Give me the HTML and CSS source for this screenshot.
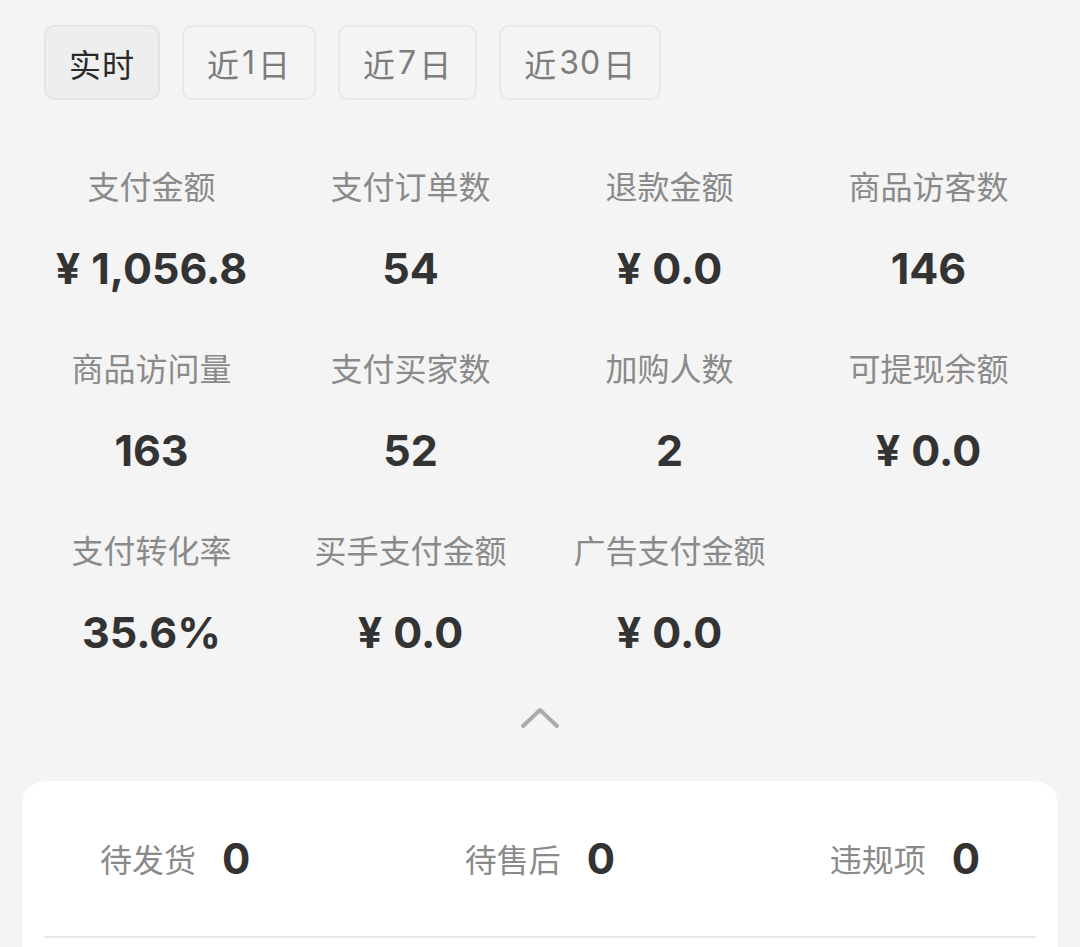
FILE: index.html
```html
<!DOCTYPE html>
<html lang="zh-CN">
<head>
    <meta charset="UTF-8">
    <meta name="viewport" content="width=device-width, initial-scale=1.0">
    <title>数据概览</title>
    <link rel="stylesheet" href="styles.css">
</head>
<body>
    <div class="page">
        <!-- Time range tabs -->
        <div class="tabs">
            <div class="tab active">实时</div>
            <div class="tab">近<span class="num">1</span>日</div>
            <div class="tab">近<span class="num">7</span>日</div>
            <div class="tab">近<span class="num">30</span>日</div>
        </div>

        <!-- Key numbers -->
        <div class="stats">
            <div class="stat"><div class="label">支付金额</div><div class="value"><span class="yen">¥</span>1,056.8</div></div>
            <div class="stat"><div class="label">支付订单数</div><div class="value">54</div></div>
            <div class="stat"><div class="label">退款金额</div><div class="value"><span class="yen">¥</span>0.0</div></div>
            <div class="stat"><div class="label">商品访客数</div><div class="value">146</div></div>

            <div class="stat"><div class="label">商品访问量</div><div class="value">163</div></div>
            <div class="stat"><div class="label">支付买家数</div><div class="value">52</div></div>
            <div class="stat"><div class="label">加购人数</div><div class="value">2</div></div>
            <div class="stat"><div class="label">可提现余额</div><div class="value"><span class="yen">¥</span>0.0</div></div>

            <div class="stat"><div class="label">支付转化率</div><div class="value">35.6%</div></div>
            <div class="stat"><div class="label">买手支付金额</div><div class="value"><span class="yen">¥</span>0.0</div></div>
            <div class="stat"><div class="label">广告支付金额</div><div class="value"><span class="yen">¥</span>0.0</div></div>
        </div>

        <!-- Collapse toggle -->
        <div class="toggle">
            <svg width="40" height="24" viewBox="0 0 40 24">
                <polyline points="3,20 20,4 37,20" fill="none" stroke="#ababab" stroke-width="4" stroke-linecap="round" stroke-linejoin="round"/>
            </svg>
        </div>

        <!-- Pending items -->
        <div class="card">
            <div class="todo">
                <div class="todo-item"><span class="todo-label">待发货</span><span class="todo-value">0</span></div>
                <div class="todo-item"><span class="todo-label">待售后</span><span class="todo-value">0</span></div>
                <div class="todo-item"><span class="todo-label">违规项</span><span class="todo-value">0</span></div>
            </div>
            <div class="divider"></div>
        </div>
    </div>
</body>
</html>
```

FILE: styles.css
```css
/* Reset */
* {
    margin: 0;
    padding: 0;
    box-sizing: border-box;
}

body {
    font-family: "Liberation Sans", "Noto Sans CJK SC", sans-serif;
    background: #f4f4f4;
    color: #333;
    overflow: hidden;
}

.page {
    padding: 25px 22px 0;
}

/* Tabs */
.tabs {
    display: flex;
    gap: 22px;
    padding: 0 22px;
}
.tab {
    height: 75px;
    padding: 0 23px;
    display: flex;
    align-items: center;
    font-family: "Inter", "Noto Sans CJK SC", sans-serif;
    font-size: 32px;
    letter-spacing: 1px;
    color: #7c7c7c;
    border: 2px solid #e8e8e8;
    border-radius: 10px;
    background: #f4f4f4;
}
.tab .num {
    padding: 0 2px;
}
.tab.active {
    color: #2a2a2a;
    background: #eeeeee;
    border-color: #e4e4e4;
}

/* Stats grid */
.stats {
    display: grid;
    grid-template-columns: repeat(4, 1fr);
    row-gap: 62px;
    margin-top: 68px;
}
.stat {
    display: flex;
    flex-direction: column;
    align-items: center;
}
.label {
    font-size: 32px;
    line-height: 40px;
    color: #8a8a8a;
    white-space: nowrap;
}
.value {
    margin-top: 40px;
    font-family: "Inter", "Liberation Sans", sans-serif;
    font-size: 43px;
    line-height: 40px;
    font-weight: 700;
    color: #333;
    white-space: nowrap;
}
.yen {
    margin-right: 11px;
}

/* Chevron */
.toggle {
    display: flex;
    justify-content: center;
    margin-top: 54px;
}

/* Pending card */
.card {
    margin-top: 51px;
    background: #fff;
    border-radius: 24px 24px 0 0;
    padding-top: 57px;
    height: 200px;
}
.todo {
    display: flex;
    justify-content: space-between;
    padding: 0 78px;
}
.todo-item {
    display: flex;
    align-items: center;
    gap: 26px;
    height: 40px;
}
.todo-label {
    font-size: 32px;
    color: #8a8a8a;
}
.todo-value {
    font-family: "Inter", "Liberation Sans", sans-serif;
    font-size: 42px;
    font-weight: 700;
    color: #333;
}
.divider {
    margin: 58px 22px 0;
    height: 2px;
    background: #e8e8e8;
}
```
